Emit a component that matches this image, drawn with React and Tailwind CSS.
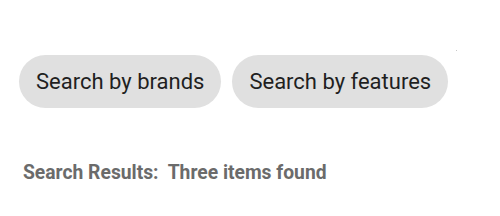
import React from 'react';

const options = ['Search by brands', 'Search by features'];

const App = () => {
    return (
        <div className="w-[500px] h-[216px] bg-white font-['Roboto',sans-serif] relative">
            <div className="pt-[55px] px-[19px]">
                <div className="flex gap-[11px]">
                    {options.map(label => (
                        <button
                            key={label}
                            className="h-[53px] px-[17px] rounded-full bg-[#e0e0e0] text-[22px] text-[#1f1f1f] whitespace-nowrap"
                        >
                            {label}
                        </button>
                    ))}
                </div>
                <p className="mt-[54px] pl-[4px] text-[19.3px] leading-[22px] font-bold text-[#6b6b6b] whitespace-pre">
                    {'Search Results:  Three items found'}
                </p>
            </div>
            <span className="absolute left-[456px] top-[50px] w-[1px] h-[1px] bg-[#c8c8c8]"></span>
        </div>
    );
};

export default App;
